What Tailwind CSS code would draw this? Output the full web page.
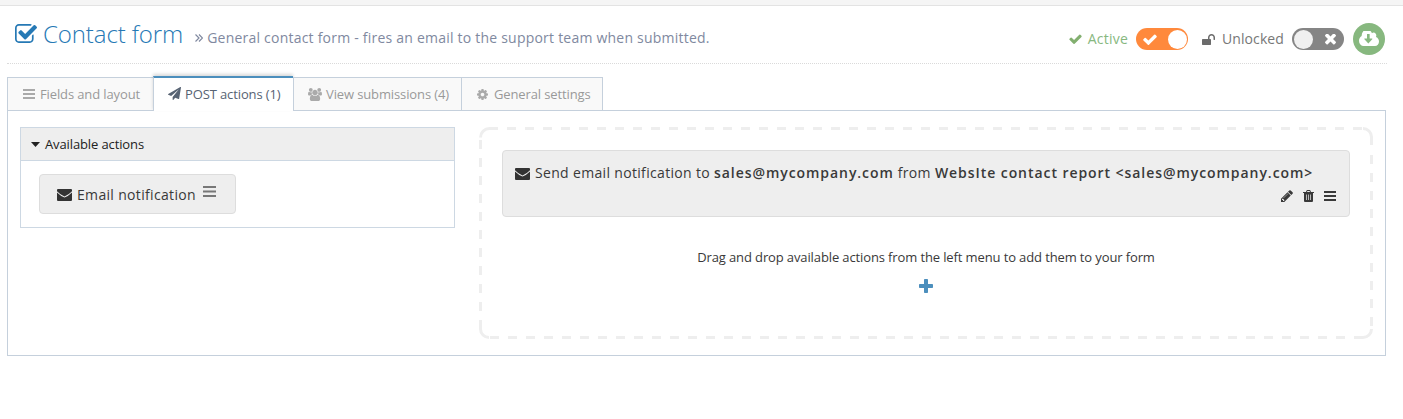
<!DOCTYPE html>
<html lang="en">
<head>
<meta charset="utf-8">
<title>Contact form</title>
<script src="https://cdn.jsdelivr.net/npm/@tailwindcss/browser@4"></script>
</head>
<body class="bg-white font-['Open_Sans',sans-serif] text-[13px] leading-5 text-[#393939] h-[419px] overflow-hidden">
<svg class="hidden">
  <symbol id="bars" viewBox="0 0 12 10"><path d="M0 0h12v2H0zM0 4h12v2H0zM0 8h12v2H0z"/></symbol>
  <symbol id="check" viewBox="121 270 1550 1252"><path d="M1671 566q0 40-28 68l-724 724-136 136q-28 28-68 28t-68-28l-136-136-362-362q-28-28-28-68t28-68l136-136q28-28 68-28t68 28l294 295 656-657q28-28 68-28t68 28l136 136q28 28 28 68z"/></symbol>
  <symbol id="mail" viewBox="0 0 15 12"><path d="M1 0h13a1 1 0 0 1 1 1v1.200Q12 5.500 7.500 7.500 3 5.500 0 2.200V1a1 1 0 0 1 1-1zM0 3.500Q3.500 7 7.500 8.500 11.500 7 15 3.500v7.500a1 1 0 0 1-1 1H1a1 1 0 0 1-1-1z"/></symbol>
</svg>
<div class="h-[6px] bg-[#f5f5f5] border-b border-[#e3e3e3]"></div>
<header class="ml-[7px] w-[1380px] h-[58px] border-b border-dotted border-[#dadada] flex items-start justify-between">
  <h1 class="flex items-start text-[24px] font-light text-[#2679b5] pl-2 whitespace-nowrap">
    <svg class="w-[22px] h-[19px] mt-[18px] fill-current" viewBox="64 128 1664 1408" preserveAspectRatio="none"><path d="M1472 930v318q0 119-84.5 203.5t-203.5 84.500h-832q-119 0-203.500-84.500t-84.500-203.500v-832q0-119 84.500-203.500t203.500-84.500h832q63 0 117 25 15 7 18 23 3 17-9 29l-49 49q-10 10-23 10-3 0-9-2-23-6-45-6h-832q-66 0-113 47t-47 113v832q0 66 47 113t113 47h832q66 0 113-47t47-113v-254q0-13 9-22l64-64q10-10 23-10 6 0 12 3 20 8 20 29zm231-489l-814 814q-24 24-57 24t-57-24l-430-430q-24-24-24-57t24-57l110-110q24-24 57-24t57 24l263 263 647-647q24-24 57-24t57 24l110 110q24 24 24 57t-24 57z"/></svg>
    <span class="ml-[6px] mt-[12px] leading-8 tracking-[-0.1px]">Contact form</span>
    <svg class="w-[8px] h-[8px] mt-[28px] ml-[12px] fill-none stroke-[#8089a0] stroke-[1.2]" viewBox="0 0 8 8"><path d="M.5.5 4 4 .5 7.500M4 .5 7.500 4 4 7.500"/></svg>
    <small class="ml-[4px] mt-[22px] text-[14px] leading-5 font-normal tracking-[0.22px] text-[#8089a0]">General contact form - fires an email to the support team when submitted.</small>
  </h1>
  <div class="flex items-center h-[34px] mt-[16px] text-[14px] text-[#777] pr-[2px]">
    <svg class="w-[13px] h-[10px] fill-[#82af6f]"><use href="#check"/></svg>
    <span class="ml-[6px] tracking-[0.2px] text-[#87b87f]">Active</span>
    <span class="ml-[8px] w-[52px] h-[22px] rounded-full bg-[#ff893c] flex items-center justify-between pl-[7px] pr-[1px]">
      <svg class="w-[14px] h-[11px] fill-white"><use href="#check"/></svg>
      <span class="size-[19px] rounded-full bg-white"></span>
    </span>
    <svg class="ml-[14px] w-[13px] h-[11px] fill-[#6b6b6b]" viewBox="64 128 1664 1408" preserveAspectRatio="none"><path d="M1728 576v256q0 26-19 45t-45 19h-64q-26 0-45-19t-19-45v-256q0-106-75-181t-181-75-181 75-75 181v192h96q40 0 68 28t28 68v576q0 40-28 68t-68 28h-960q-40 0-68-28t-28-68v-576q0-40 28-68t68-28h672v-192q0-185 131.500-316.500t316.500-131.500 316.500 131.500 131.500 316.500z"/></svg>
    <span class="ml-[7px] tracking-[0.1px]">Unlocked</span>
    <span class="ml-[8px] w-[52px] h-[22px] rounded-full bg-[#858585] flex items-center justify-between pl-[2px] pr-[8px]">
      <span class="size-[19px] rounded-full bg-[#f0f0f0]"></span>
      <svg class="size-[11px] fill-white" viewBox="302 430 1188 1188"><path transform="translate(0 128)" d="M1490 1194q0 40-28 68l-136 136q-28 28-68 28t-68-28l-294-294-294 294q-28 28-68 28t-68-28l-136-136q-28-28-28-68t28-68l294-294-294-294q-28-28-28-68t28-68l136-136q28-28 68-28t68 28l294 294 294-294q28-28 68-28t68 28l136 136q28 28 28 68t-28 68l-294 294 294 294q28 28 28 68z"/></svg>
    </span>
    <span class="ml-[9px] size-[32px] rounded-full bg-[#87b87f] flex items-center justify-center">
      <svg class="w-[20px] h-[15px] -mt-[2px] fill-white" viewBox="-64 256 1920 1280" preserveAspectRatio="none"><path d="M1216 928q0-14-9-23t-23-9h-224v-352q0-13-9.500-22.500t-22.500-9.500h-192q-13 0-22.500 9.500t-9.500 22.500v352h-224q-13 0-22.500 9.500t-9.500 22.500q0 14 9 23l352 352q9 9 23 9t23-9l351-351q10-12 10-24zm640 224q0 159-112.500 271.500t-271.500 112.500h-1088q-185 0-316.500-131.500t-131.500-316.500q0-130 70-240t188-165q-2-30-2-43 0-212 150-362t362-150q156 0 285.500 87t188.500 231q71-62 166-62 106 0 181 75t75 181q0 76-41 138 130 31 213.500 135.500t83.500 238.500z"/></svg>
    </span>
  </div>
</header>

<nav class="relative z-10 ml-[7px] mt-[12px] h-[35px] flex items-end text-[#999] tracking-[-0.12px] whitespace-nowrap">
  <div class="w-[146px] h-[34px] border border-r-0 border-[#c5d0dc] bg-[#f9f9f9] flex items-center pl-[15px]">
    <svg class="w-[12px] h-[10px] fill-[#aaa]"><use href="#bars"/></svg><span class="ml-[5px]">Fields and layout</span>
  </div>
  <div class="w-[140px] h-[35px] border-t-2 border-t-[#4c8fbd] border-l border-l-[#c5d0dc] bg-white flex items-center pl-[14px] pb-[2px] text-[#576373] shadow-[0_-2px_3px_0_rgba(0,0,0,0.15)]">
    <svg class="size-[13px] fill-current" viewBox="0 0 1792 1792"><path d="M1764 11q33 24 27 64l-256 1536q-5 29-32 45-14 8-31 8-11 0-24-5l-453-185-242 295q-18 23-49 23-13 0-22-4-19-7-30.500-23.500t-11.500-36.500v-349l864-1059-1069 925-395-162q-37-14-40-55-2-40 32-59l1664-960q15-9 32-9 20 0 36 11z"/></svg><span class="ml-[4px]">POST actions (1)</span>
  </div>
  <div class="w-[168px] h-[34px] border border-r-0 border-[#c5d0dc] bg-[#f9f9f9] flex items-center pl-[14px]">
    <svg class="w-[14px] h-[13px] fill-[#aaa]" viewBox="-64 0 1920 1792" preserveAspectRatio="none"><path transform="translate(-64 0)" d="M593 896q-162 5-265 128h-134q-82 0-138-40.500t-56-118.500q0-353 124-353 6 0 43.500 21t97.500 42.500 119 21.500q67 0 133-23-5 37-5 66 0 139 81 256zm1071 637q0 120-73 189.500t-194 69.500h-874q-121 0-194-69.500t-73-189.500q0-53 3.500-103.500t14-109 26.500-108.500 43-97.500 62-81 85.500-53.500 111.500-20q10 0 43 21.500t73 48 107 48 135 21.500 135-21.500 107-48 73-48 43-21.500q61 0 111.500 20t85.500 53.500 62 81 43 97.500 26.500 108.500 14 109 3.500 103.500zm-1024-1277q0 106-75 181t-181 75-181-75-75-181 75-181 181-75 181 75 75 181zm704 384q0 159-112.500 271.500t-271.500 112.500-271.500-112.500-112.500-271.500 112.500-271.500 271.500-112.500 271.500 112.500 112.500 271.500zm576 225q0 78-56 118.500t-138 40.500h-134q-103-123-265-128 81-117 81-256 0-29-5-66 66 23 133 23 59 0 119-21.500t97.500-42.500 43.500-21q124 0 124 353zm-128-609q0 106-75 181t-181 75-181-75-75-181 75-181 181-75 181 75 75 181z"/></svg><span class="ml-[4px]">View submissions (4)</span>
  </div>
  <div class="w-[142px] h-[34px] border border-[#c5d0dc] bg-[#f9f9f9] flex items-center pl-[15px]">
    <svg class="size-[11px] fill-[#aaa]" viewBox="128 128 1536 1536"><path d="M1152 896q0-106-75-181t-181-75-181 75-75 181 75 181 181 75 181-75 75-181zm512-109v222q0 12-8 23t-20 13l-185 28q-19 54-39 91 35 50 107 138 10 12 10 25t-9 23q-27 37-99 108t-94 71q-12 0-26-9l-138-108q-44 23-91 38-16 136-29 186-7 28-36 28h-222q-14 0-24.500-8.500t-11.500-21.500l-28-184q-49-16-90-37l-141 107q-10 9-25 9-14 0-25-11-126-114-165-168-7-10-7-23 0-12 8-23 15-21 51-66.500t54-70.500q-27-50-41-99l-183-27q-13-2-21-12.500t-8-23.500v-222q0-12 8-23t19-13l186-28q14-46 39-92-40-57-107-138-10-12-10-24 0-10 9-23 26-36 98.500-107.500t94.500-71.500q13 0 26 10l138 107q44-23 91-38 16-136 29-186 7-28 36-28h222q14 0 24.500 8.500t11.500 21.500l28 184q49 16 90 37l142-107q9-9 24-9 13 0 25 10 129 119 165 170 7 8 7 22 0 12-8 23-15 21-51 66.500t-54 70.500q26 50 41 98l183 28q13 2 21 12.500t8 23.500z"/></svg><span class="ml-[6px]">General settings</span>
  </div>
</nav>

<main class="ml-[7px] -mt-px w-[1379px] h-[246px] border border-[#c5d0dc] flex items-start pl-[12px] pt-[16px]">
  <section class="w-[435px] h-[101px] border border-[#cdd8e3]">
    <h2 class="h-[33px] bg-[#eee] border-b border-[#cdd8e3] flex items-center pl-[10px] tracking-[-0.12px] text-[#222]">
      <svg class="w-[9px] h-[5px] fill-current" viewBox="0 0 9 5"><path d="M0 0h9L4.500 5z"/></svg><span class="ml-[5px]">Available actions</span>
    </h2>
    <div class="ml-[18px] mt-[13px] w-[197px] h-[40px] rounded-[4px] border border-[#ddd] bg-[#eee] flex items-center pl-[17px] text-[14px]">
      <svg class="w-[15px] h-[12px] mt-[2px] fill-[#333]"><use href="#mail"/></svg><span class="ml-[5px] pt-[2px] tracking-[0.33px]">Email notification</span>
      <svg class="w-[13px] h-[11px] ml-[7px] -mt-[5px] fill-[#777]" viewBox="0 0 13 11"><path d="M0 0h13v2H0zM0 4.500h13v2H0zM0 9h13v2H0z"/></svg>
    </div>
  </section>
  <section class="relative ml-[24px] w-[894px] h-[212px] px-[23px] pt-[23px] flex flex-col items-center">
    <svg class="absolute inset-0 w-[894px] h-[212px] fill-none stroke-[#eee] stroke-3" viewBox="0 0 894 212">
      <path d="M28 1.500H883M1.500 13V192M892.500 28V200M11 210.500H875" stroke-dasharray="9 9"/>
      <path d="M1.500 10.500A9 9 0 0 1 10.500 1.500H19M884 1.500A8.500 8.500 0 0 1 892.500 10V18M892.500 202A8.500 8.500 0 0 1 884 210.500H875M1.500 193V202A8.500 8.500 0 0 0 10 210.500"/>
    </svg>
    <div class="w-[848px] h-[67px] rounded-[4px] border border-[#ddd] bg-[#eee] px-[12px] pt-[12px] text-[14px]">
      <div class="flex items-center whitespace-nowrap">
        <svg class="w-[15px] h-[12px] mt-[2px] fill-[#333]"><use href="#mail"/></svg>
        <p class="ml-[5px] tracking-[0.33px]">Send email notification to <b class="font-semibold tracking-[0.94px]">sales@mycompany.com</b> from <b class="font-semibold tracking-[0.94px]">WebsIte contact report &lt;sales@mycompany.com&gt;</b></p>
      </div>
      <div class="flex items-center justify-end mt-[7px] pr-px gap-[10px] fill-[#393939]">
        <svg class="size-[12px]" viewBox="128 128 1536 1536"><path d="M491 1536l91-91-235-235-91 91v107h128v128h107zm523-928q0-22-22-22-10 0-17 7l-542 542q-7 7-7 17 0 22 22 22 10 0 17-7l542-542q7-7 7-17zm-54-192l416 416-832 832h-416v-416zm683 96q0 53-37 90l-166 166-416-416 166-165q36-38 90-38 53 0 91 38l235 234q37 39 37 91z"/></svg>
        <svg class="w-[11px] h-[12px]" viewBox="0 0 11 12"><path fill-rule="evenodd" d="M0 2h3l.6-1.500Q3.800 0 4.300 0h2.400q.5 0 .7.500L8 2h3v1h-1v8q0 1-1 1H2q-1 0-1-1V3H0zM4 2h3l-.4-1H4.400zM3 4.500v5.500h.7V4.500zM5.150 4.500v5.500h.7V4.500zM7.300 4.500v5.500h.7V4.500z"/></svg>
        <svg class="w-[12px] h-[10px]"><use href="#bars"/></svg>
      </div>
    </div>
    <p class="mt-[30px] tracking-[-0.12px] whitespace-nowrap">Drag and drop available actions from the left menu to add them to your form</p>
    <svg class="size-[14px] mt-[12px] fill-[#4c8fbd]" viewBox="0 0 14 14"><path d="M5.800 0h2.400q.8 0 .8.800V5h4.200q.8 0 .8.800v2.400q0 .8-.8.800H9v4.200q0 .8-.8.800H5.800q-.8 0-.8-.8V9H.8Q0 9 0 8.200V5.800Q0 5 .8 5H5V.8Q5 0 5.800 0z"/></svg>
  </section>
</main>
</body>
</html>
